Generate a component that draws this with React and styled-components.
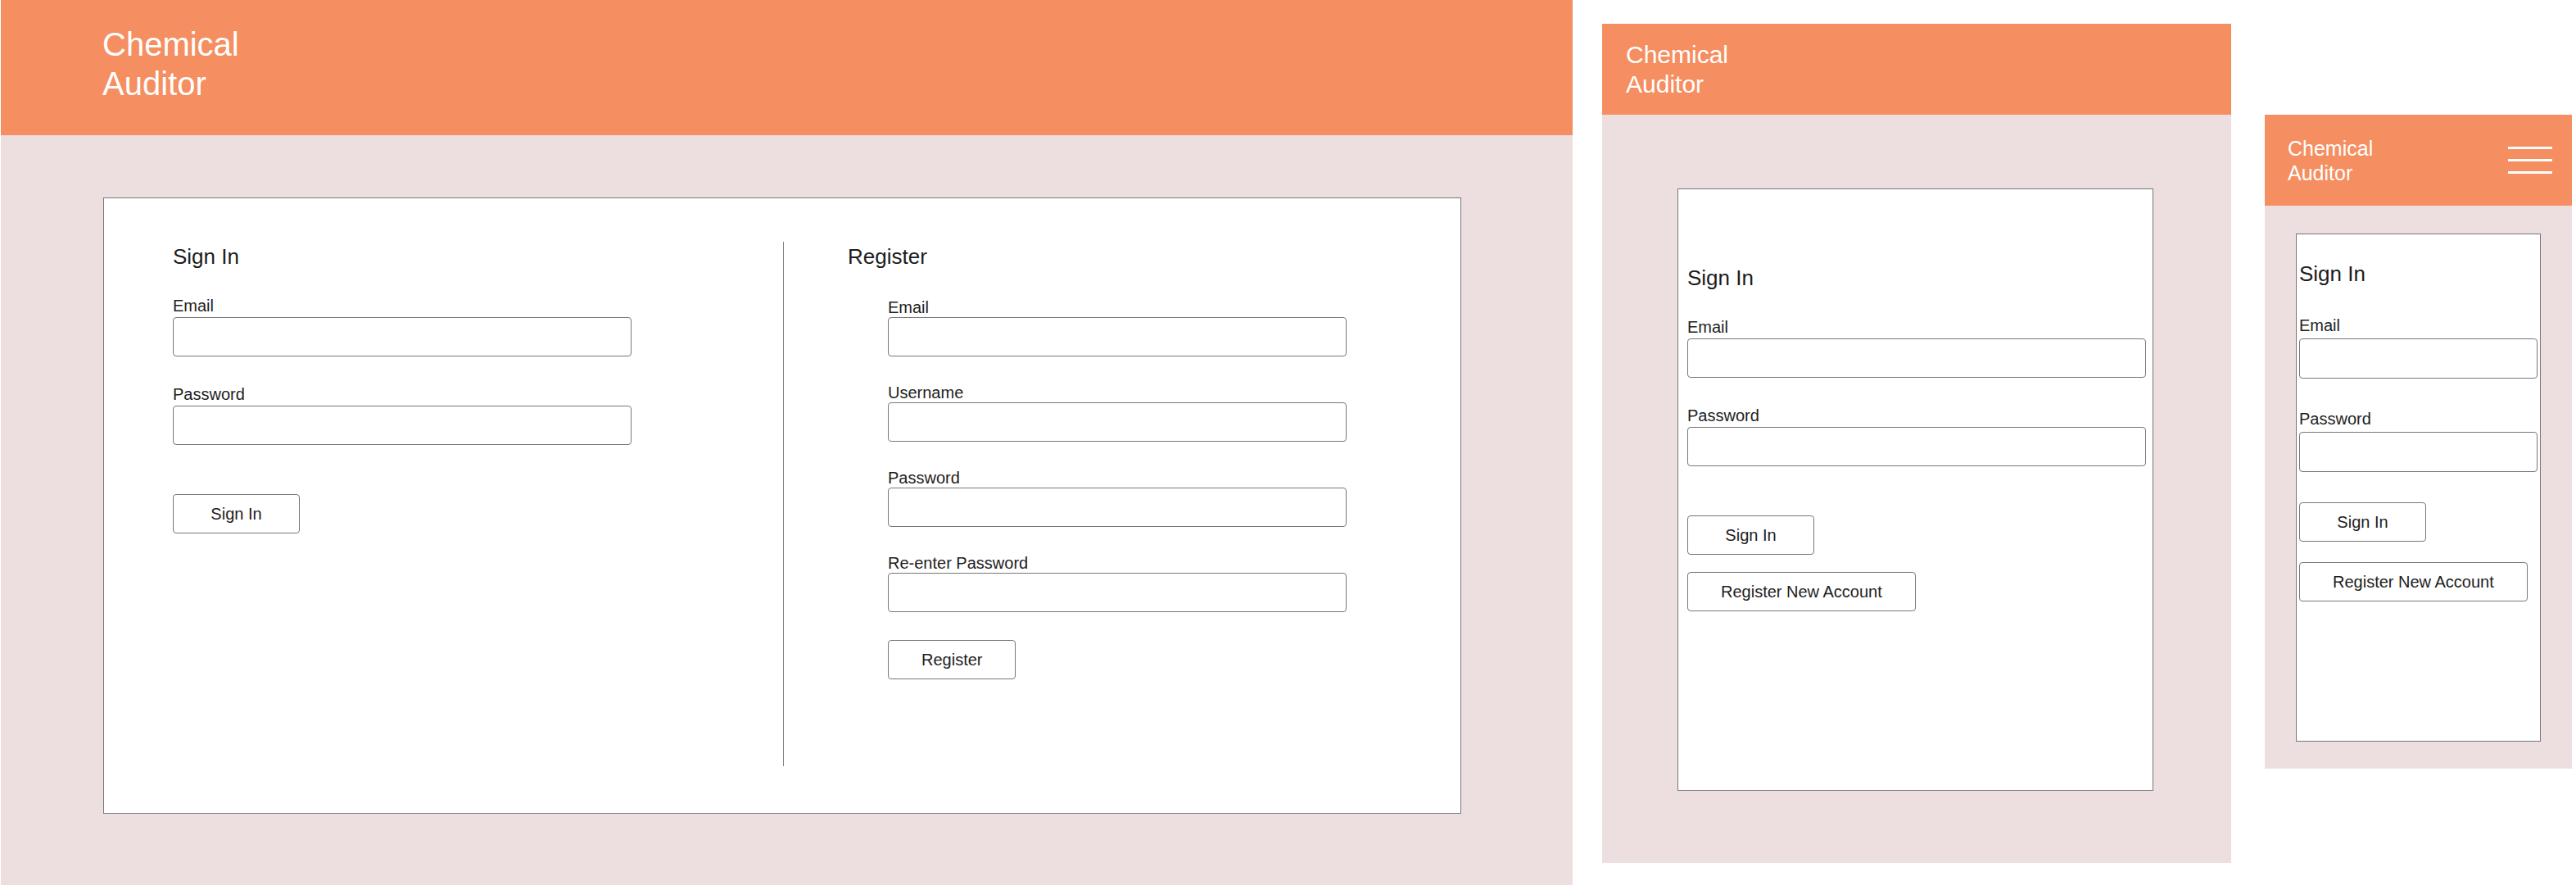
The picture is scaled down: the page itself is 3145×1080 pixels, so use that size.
import styled, { createGlobalStyle } from "styled-components";

const ORANGE = "#f58e61";
const PINK = "#eddfdf";
const LINE = "#777777";

const GlobalStyle = createGlobalStyle`
  body {
    margin: 0;
    background: #ffffff;
    font-family: "Liberation Sans", Arial, Helvetica, sans-serif;
    color: #1e1e1e;
  }
`;

const Canvas = styled.div`
  display: flex;
  align-items: flex-start;
  width: 3145px;
  height: 1080px;
  overflow: hidden;
`;

const Frame = styled.div`
  flex: none;
  display: flex;
  flex-direction: column;
  width: ${(p) => p.$w}px;
  height: ${(p) => p.$h}px;
  margin: ${(p) => p.$m};
  background: ${PINK};
`;

const Header = styled.header`
  flex: none;
  display: flex;
  align-items: center;
  justify-content: space-between;
  height: ${(p) => p.$h}px;
  padding: ${(p) => p.$pad};
  box-sizing: border-box;
  background: ${ORANGE};
`;

const Title = styled.h1`
  margin: 0;
  font-size: ${(p) => p.$size}px;
  line-height: 1.2;
  font-weight: 400;
  color: #ffffff;
`;

const Hamburger = styled.div`
  display: flex;
  flex-direction: column;
  gap: 12px;
`;

const Bar = styled.span`
  display: block;
  width: 54px;
  height: 3px;
  background: #ffffff;
`;

const Card = styled.div`
  flex: none;
  box-sizing: border-box;
  display: flex;
  flex-direction: column;
  width: ${(p) => p.$w}px;
  height: ${(p) => p.$h}px;
  margin: ${(p) => p.$m};
  padding: ${(p) => p.$pad};
  background: #ffffff;
  border: 1px solid ${LINE};
`;

const Columns = styled.div`
  flex: 1;
  display: flex;
`;

const LeftColumn = styled.section`
  width: 745px;
  padding-top: 3px;
`;

const RightColumn = styled.section`
  flex: 1;
  padding: 3px 0 0 78px;
  border-left: 1px solid #808080;
`;

const Heading = styled.h2`
  margin: 0;
  font-size: 26px;
  line-height: 30px;
  font-weight: 400;
  color: #1c1c1c;
`;

const Form = styled.form`
  display: flex;
  flex-direction: column;
  align-items: flex-start;
  margin-left: ${(p) => p.$indent || 0}px;
`;

const Field = styled.div`
  display: flex;
  flex-direction: column;
  gap: ${(p) => p.$labelGap}px;
  width: ${(p) => p.$w};
  margin-top: ${(p) => p.$gap}px;
`;

const Label = styled.label`
  font-size: 20px;
  line-height: 23px;
  color: #1e1e1e;
`;

const Input = styled.input`
  display: block;
  box-sizing: border-box;
  width: 100%;
  height: ${(p) => p.$h}px;
  margin: 0;
  padding: 0 10px;
  border: 1px solid ${LINE};
  border-radius: 4px;
  background: #ffffff;
  font: inherit;
  font-size: 18px;
  outline: none;
`;

const Button = styled.button`
  box-sizing: border-box;
  height: 48px;
  min-width: 155px;
  margin-top: ${(p) => p.$gap}px;
  padding: 0 40px;
  border: 1px solid ${LINE};
  border-radius: 4px;
  background: #ffffff;
  font-family: inherit;
  font-size: 20px;
  color: #1e1e1e;
  cursor: pointer;
`;

const SPACING = {
  desktop: { head: 34, label: 2, field: 35, input: 48, width: "560px", button: 60 },
  tablet: { head: 34, label: 2, field: 35, input: 48, width: "560px", button: 60, extra: 21 },
  mobile: { head: 37, label: 4, field: 38, input: 49, width: "100%", button: 37, extra: 25 },
};

const SignInForm = ({ size, withRegister }) => {
  const s = SPACING[size];
  return (
    <>
      <Heading>Sign In</Heading>
      <Form onSubmit={(e) => e.preventDefault()}>
        <Field $gap={s.head} $labelGap={s.label} $w={s.width}>
          <Label>Email</Label>
          <Input type="email" $h={s.input} />
        </Field>
        <Field $gap={s.field} $labelGap={s.label} $w={s.width}>
          <Label>Password</Label>
          <Input type="password" $h={s.input} />
        </Field>
        <Button type="submit" $gap={s.button}>
          Sign In
        </Button>
        {withRegister && (
          <Button type="button" $gap={s.extra}>
            Register New Account
          </Button>
        )}
      </Form>
    </>
  );
};

const REGISTER_FIELDS = [
  { label: "Email", type: "email" },
  { label: "Username", type: "text" },
  { label: "Password", type: "password" },
  { label: "Re-enter Password", type: "password" },
];

const RegisterForm = () => (
  <>
    <Heading>Register</Heading>
    <Form $indent={49} onSubmit={(e) => e.preventDefault()}>
      {REGISTER_FIELDS.map((f, i) => (
        <Field key={f.label} $gap={i === 0 ? 36 : 33} $labelGap={0} $w="560px">
          <Label>{f.label}</Label>
          <Input type={f.type} $h={48} />
        </Field>
      ))}
      <Button type="submit" $gap={34}>
        Register
      </Button>
    </Form>
  </>
);

const App = () => {
  return (
    <>
      <GlobalStyle />
      <Canvas>
        <Frame $w={1919} $h={1080} $m="0 0 0 1px">
          <Header $h={165} $pad="0 0 9px 124px">
            <Title $size={40}>
              Chemical
              <br />
              Auditor
            </Title>
          </Header>
          <Card $w={1658} $h={752} $m="76px 0 0 125px" $pad="53px 0 57px 84px">
            <Columns>
              <LeftColumn>
                <SignInForm size="desktop" />
              </LeftColumn>
              <RightColumn>
                <RegisterForm />
              </RightColumn>
            </Columns>
          </Card>
        </Frame>

        <Frame $w={768} $h={1024} $m="29px 0 0 36px">
          <Header $h={111} $pad="0 0 0 29px">
            <Title $size={30}>
              Chemical
              <br />
              Auditor
            </Title>
          </Header>
          <Card $w={581} $h={735} $m="90px 0 0 92px" $pad="93px 11px 0">
            <SignInForm size="tablet" withRegister />
          </Card>
        </Frame>

        <Frame $w={375} $h={798} $m="140px 0 0 41px">
          <Header $h={111} $pad="0 24px 0 28px">
            <Title $size={25}>
              Chemical
              <br />
              Auditor
            </Title>
            <Hamburger>
              <Bar />
              <Bar />
              <Bar />
            </Hamburger>
          </Header>
          <Card $w={299} $h={620} $m="34px 0 0 38px" $pad="33px 3px 0">
            <SignInForm size="mobile" withRegister />
          </Card>
        </Frame>
      </Canvas>
    </>
  );
};

export default App;
